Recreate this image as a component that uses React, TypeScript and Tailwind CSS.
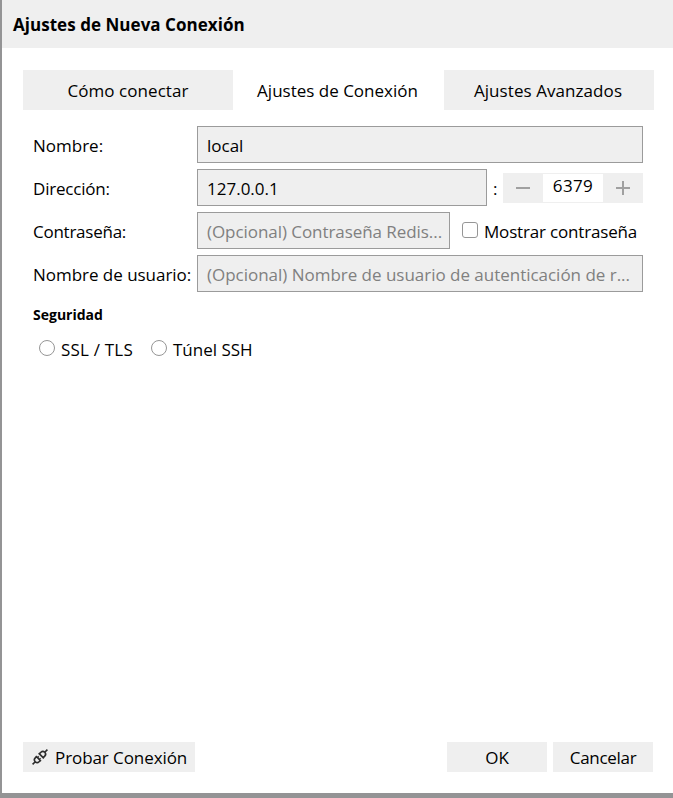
import { ReactNode } from 'react';

function Tab({ children, active, className = '' }: { children: ReactNode; active?: boolean; className?: string }) {
  return (
    <button className={`flex h-10 w-[210px] items-center justify-center whitespace-nowrap pt-0.5 ${active ? 'bg-white' : 'bg-[#efefef]'} ${className}`}>
      {children}
    </button>
  );
}

function Row({ label, className = '', children }: { label: string; className?: string; children: ReactNode }) {
  return (
    <div className="flex h-[37px] items-center">
      <label className={`w-[164px] shrink-0 whitespace-nowrap pt-0.5 ${className}`}>{label}</label>
      {children}
    </div>
  );
}

function Field({ className = '', children }: { className?: string; children: ReactNode }) {
  return (
    <div className={`flex h-[37px] shrink-0 items-center whitespace-nowrap border border-[#9b9b9b] bg-[#efefef] pl-[9px] pt-0.5 ${className}`}>
      {children}
    </div>
  );
}

function PortStepper() {
  return (
    <div className="flex h-[30px] w-[140px] bg-[#efefef]">
      <button className="flex w-10 items-center justify-center">
        <span className="h-[2px] w-3.5 bg-[#a0a0a0]" />
      </button>
      <div className="my-px flex w-[60px] justify-center bg-white leading-6 tracking-[0.35px]">6379</div>
      <button className="flex w-10 items-center justify-center">
        <svg width="14" height="14" viewBox="0 0 14 14" fill="#a0a0a0">
          <path d="M0 6h14v2H0zM6 0h2v14H6z" />
        </svg>
      </button>
    </div>
  );
}

function Radio({ children }: { children: ReactNode }) {
  return (
    <label className="flex items-start gap-1.5">
      <span className="size-4 rounded-full border border-[#969696] bg-white" />
      <span className="-mt-0.5 whitespace-nowrap">{children}</span>
    </label>
  );
}

function ConnectIcon() {
  return (
    <svg width="16" height="16" viewBox="-8 -8 16 16" fill="none" stroke="#2c2c2c" strokeWidth="1.6">
      <g transform="rotate(-45)">
        <path d="M-10.500 0h3.800M-2.300-3.700v7.400M-2.300-2.700h-1.700a2.700 2.700 0 0 0 0 5.400h1.700M-2.300-1.300h1.800M-2.300 1.300h1.800" />
        <path d="M10.500 0h-3.800M1.800-3.700v7.400M1.800-2.700h2.200a2.700 2.700 0 0 1 0 5.400h-2.200" />
      </g>
    </svg>
  );
}

export default function App() {
  return (
    <div className="flex h-[798px] w-[673px] flex-col overflow-hidden border-b-[5px] border-l-2 border-[#949495] bg-white font-['Open_Sans',sans-serif] text-[17px] leading-6 text-black">
      <header className="flex h-12 shrink-0 items-center bg-[#efefef] pl-[11px] pt-0.5">
        <h1 className="whitespace-nowrap font-bold tracking-[0.04px]">Ajustes de Nueva Conexión</h1>
      </header>
      <nav className="mt-[22px] flex pl-[21px]">
        <Tab className="tracking-[0.05px]">Cómo conectar</Tab>
        <Tab active className="mx-[0.5px] pr-[2px]">Ajustes de Conexión</Tab>
        <Tab className="pr-[2px] tracking-[0.07px]">Ajustes Avanzados</Tab>
      </nav>
      <main className="mt-4 flex flex-1 flex-col pl-[31px]">
        <div className="flex flex-col gap-1.5">
          <Row label="Nombre:"><Field className="w-[446px]">local</Field></Row>
          <Row label="Dirección:" className="tracking-[-0.2px]">
            <Field className="w-[290px]">127.0.0.1</Field>
            <span className="w-4 pl-1.5 pt-0.5">:</span>
            <PortStepper />
          </Row>
          <Row label="Contraseña:" className="tracking-[-0.25px]">
            <Field className="w-[253px] tracking-[-0.06px] text-[#808080]">(Opcional) Contraseña Redis...</Field>
            <label className="ml-3 flex items-center gap-1.5">
              <span className="mb-0.5 size-4 rounded-[3px] border border-[#969696] bg-white" />
              <span className="whitespace-nowrap pt-0.5 tracking-[-0.17px]">Mostrar contraseña</span>
            </label>
          </Row>
          <Row label="Nombre de usuario:" className="tracking-[-0.03px]">
            <Field className="w-[446px] tracking-[-0.02px] text-[#808080]">(Opcional) Nombre de usuario de autenticación de r...</Field>
          </Row>
        </div>
        <h2 className="mt-[11px] text-[14px] font-bold">Seguridad</h2>
        <div className="mt-[13px] flex pl-1.5">
          <div className="w-28 tracking-[0.2px]"><Radio>SSL / TLS</Radio></div>
          <Radio>Túnel SSH</Radio>
        </div>
      </main>
      <footer className="mb-[21px] flex h-[30px] shrink-0 pl-[21px]">
        <button className="flex w-[172px] items-center gap-[7px] whitespace-nowrap bg-[#efefef] pl-[9px] tracking-[-0.08px]">
          <ConnectIcon />
          <span className="pt-0.5">Probar Conexión</span>
        </button>
        <button className="ml-auto w-[100px] bg-[#efefef] pt-0.5">OK</button>
        <button className="ml-1.5 mr-5 w-[100px] bg-[#efefef] pt-0.5 tracking-[-0.3px]">Cancelar</button>
      </footer>
    </div>
  );
}
